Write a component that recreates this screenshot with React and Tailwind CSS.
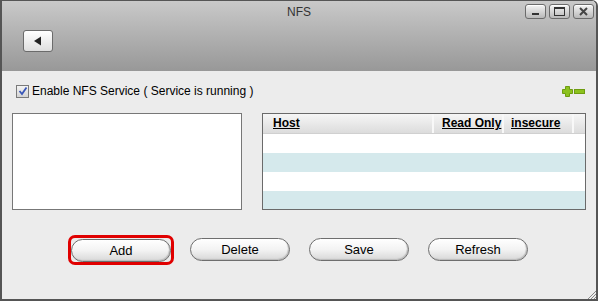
import React from 'react';

const font = { fontFamily: '"Liberation Sans", Arial, sans-serif' };

function WinButton({ children }) {
  return (
    <div className="flex h-[15px] w-[21px] items-center justify-center rounded-[3px] border border-[#6b6b6b] bg-gradient-to-b from-[#f4f4f4] to-[#b9b9b9] shadow-[inset_0_1px_0_#fff]">
      {children}
    </div>
  );
}

function PillButton({ label, active }) {
  const btn = (
    <button className="h-[23px] w-[100px] rounded-full border border-[#6e6e6e] bg-gradient-to-b from-[#ffffff] via-[#f3f3f3] to-[#d8d8d8] text-[13px] text-black shadow-[inset_-1px_-1px_1px_#bbb]">
      {label}
    </button>
  );
  if (!active) return btn;
  return <div className="-m-[3px] rounded-[7px] border-[3px] border-[#e00000] p-0">{btn}</div>;
}

export default function App() {
  return (
    <div className="h-[302px] w-[600px] overflow-hidden bg-white" style={font}>
      <div className="flex h-[301px] w-[598px] flex-col overflow-hidden rounded-tr-[6px] border-x-2 border-t border-b-2 border-[#555]">
        {/* title bar / toolbar */}
        <div className="relative h-[70px] shrink-0 bg-gradient-to-b from-[#c9c9c9] to-[#989898]">
          <div className="pt-[2px] text-center text-[12px] text-[#333]">NFS</div>
          <div className="absolute right-[2px] top-[3px] flex gap-[3px]">
            <WinButton>
              <div className="mt-[5px] h-[2px] w-[7px] bg-[#333]" />
            </WinButton>
            <WinButton>
              <div className="h-[9px] w-[11px] border border-t-2 border-[#333]" />
            </WinButton>
            <WinButton>
              <svg width="11" height="9" viewBox="0 0 11 9">
                <path d="M2 1 L9 8 M9 1 L2 8" stroke="#444" strokeWidth="2" />
              </svg>
            </WinButton>
          </div>
          <div className="absolute left-[21px] top-[29px] flex h-[22px] w-[30px] items-center justify-center rounded-[3px] border border-[#6b6b6b] bg-gradient-to-b from-[#ffffff] to-[#dedede]">
            <svg width="10" height="10" viewBox="0 0 10 10">
              <path d="M1 5 L8 0.5 L8 9.5 Z" fill="#222" />
            </svg>
          </div>
        </div>

        {/* content */}
        <div className="flex flex-1 flex-col bg-[#ececec] px-[10px]">
          <div className="mt-[12px] flex h-[16px] items-center">
            <div className="ml-[4px] flex h-[13px] w-[13px] items-center justify-center border border-[#7a7a7a] bg-gradient-to-b from-[#f4f4f4] to-[#d4d4d4]">
              <svg width="10" height="10" viewBox="0 0 10 10">
                <path d="M1.5 5 L4 8 L8.5 1.5" stroke="#3a57b8" strokeWidth="1.8" fill="none" />
              </svg>
            </div>
            <span className="ml-[3px] text-[12px] text-black">Enable NFS Service ( Service is running )</span>
            <div className="ml-auto mr-[1px] flex items-center gap-[1px]">
              <svg width="11" height="11" viewBox="0 0 11 11">
                <path d="M3.5 0.5 H7.5 V3.5 H10.5 V7.5 H7.5 V10.5 H3.5 V7.5 H0.5 V3.5 H3.5 Z" fill="#8cc21d" stroke="#6e9c10" />
              </svg>
              <svg width="11" height="5" viewBox="0 0 11 5">
                <rect x="0.5" y="0.5" width="10" height="4" fill="#8cc21d" stroke="#6e9c10" />
              </svg>
            </div>
          </div>

          <div className="mt-[14px] flex gap-[20px]">
            <div className="h-[97px] w-[230px] border border-[#777] bg-white" />
            <div className="h-[97px] flex-1 overflow-hidden border border-[#6a6a6a] bg-white">
              <div className="flex h-[19px] bg-gradient-to-b from-[#f6f6f6] to-[#dcdcdc] text-[12px] font-bold text-black">
                <div className="w-[171px] border-r-2 border-[#f8f8f8] pl-[10px] leading-[18px] underline">Host</div>
                <div className="w-[70px] border-r-2 border-[#f8f8f8] pl-[8px] leading-[18px] underline">Read Only</div>
                <div className="w-[70px] border-r-2 border-[#f8f8f8] pl-[7px] leading-[18px] underline">insecure</div>
                <div className="flex-1" />
              </div>
              <div className="h-px bg-[#d0d0d0]" />
              <div className="h-[19px] bg-white" />
              <div className="h-[19px] bg-[#d5e9ec]" />
              <div className="h-[19px] bg-white" />
              <div className="h-[19px] bg-[#d5e9ec]" />
            </div>
          </div>

          <div className="mt-[28px] flex gap-[19px] pl-[59px]">
            <PillButton label="Add" active />
            <PillButton label="Delete" />
            <PillButton label="Save" />
            <PillButton label="Refresh" />
          </div>

          <div className="mt-auto flex justify-end">
            <svg width="9" height="9" viewBox="0 0 9 9" className="-mr-[10px] mb-0">
              <path d="M9 1 L1 9 M9 4 L4 9 M9 7 L7 9" stroke="#888" strokeWidth="1" />
            </svg>
          </div>
        </div>
      </div>
    </div>
  );
}
